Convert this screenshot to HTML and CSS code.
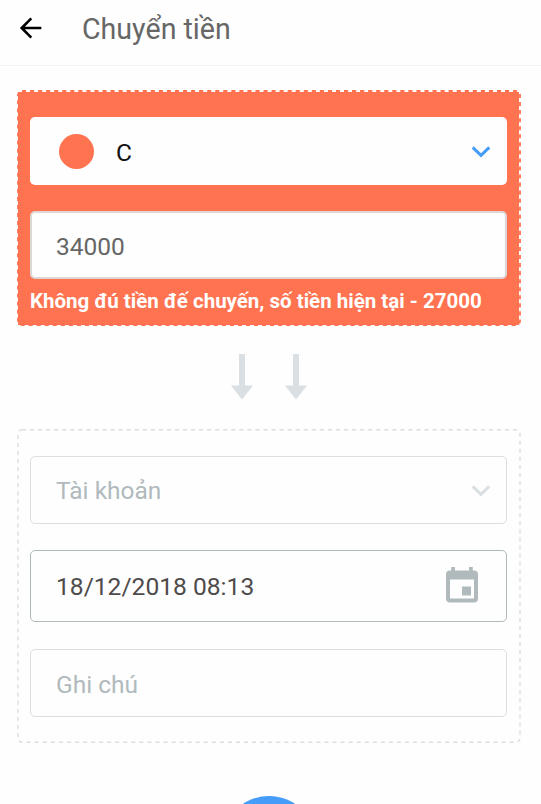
FILE: index.html
```html
<!DOCTYPE html>
<html lang="vi">
<head>
<meta charset="utf-8">
<title>Chuyển tiền</title>
<link rel="stylesheet" href="styles.css">
</head>
<body>
<header class="bar">
  <svg class="back" viewBox="0 0 24 24" width="24" height="24"><path d="M22.3 12H3M12.3 2.4 2.7 12l9.600 9.600" fill="none" stroke="#000" stroke-width="2.6"/></svg>
  <h1>Chuyển tiền</h1>
</header>
<main>
  <section class="panel source">
    <svg class="outline" width="504" height="236"><rect x="1" y="1" width="502" height="234" rx="4"/></svg>
    <div class="field account">
      <span class="dot"></span><span class="name">C</span>
      <svg class="chevron" width="20" height="12" viewBox="0 0 20 12"><path d="m1.7 1.4 8.3 8 8.3-8"/></svg>
    </div>
    <div class="field amount">34000</div>
    <p class="error">Không đú tiền đế chuyến, số tiền hiện tại - 27000</p>
  </section>
  <div class="arrows">
    <svg width="22" height="46" viewBox="0 0 22 46"><path d="M8 0h6v31.5h8L11 45.5 0 31.5h8z"/></svg>
    <svg width="22" height="46" viewBox="0 0 22 46"><path d="M8 0h6v31.5h8L11 45.5 0 31.5h8z"/></svg>
  </div>
  <section class="panel target">
    <svg class="outline" width="504" height="315"><rect x="1" y="0.7" width="502" height="312.5" rx="4"/></svg>
    <div class="field select">Tài khoản
      <svg class="chevron" width="20" height="12" viewBox="0 0 20 12"><path d="m1.7 1.4 8.3 8 8.3-8"/></svg>
    </div>
    <div class="field date">18/12/2018 08:13
      <svg class="calendar" width="32" height="36" viewBox="0 0 32 36"><path fill-rule="evenodd" d="M5.2 0H9v3.5h14V0h3.8v3.5H28a4 4 0 0 1 4 4V31.5a4 4 0 0 1-4 4H4a4 4 0 0 1-4-4v-24a4 4 0 0 1 4-4h1.200zM4 12.500v19h24v-19zM16 19.500h9v9h-9z"/></svg>
    </div>
    <div class="field note">Ghi chú</div>
  </section>
  <div class="submit"></div>
</main>
</body>
</html>
```
FILE: styles.css
```css
* { box-sizing: border-box; }
html, body { height: 804px; overflow: hidden; }
body { margin: 0; background: #fefefe; font-family: Roboto, sans-serif; }
.bar { height: 66px; border-bottom: 1px solid #f3f3f3; display: flex; align-items: flex-start; padding: 16px 0 0 19px; }
.back { flex: none; }
h1 { margin: -4px 0 0 39px; font-size: 28.600px; line-height: 34px; font-weight: 400; color: #666; }
main { height: 738px; overflow: hidden; padding: 24px 20px 0 17px; }
.panel { position: relative; width: 504px; padding: 27px 14px 0 13px; }
.outline { position: absolute; left: 0; top: 0; }
.outline rect { fill: none; stroke: #d9dfe2; stroke-width: 1.4; stroke-dasharray: 4.100 3.950; }
.source { height: 236px; background: linear-gradient(#ff7350, #ff7350) center / 501.4px 233px no-repeat; }
.source .outline rect { stroke: #ff7350; stroke-width: 1.800; }
.target { height: 315px; }
.field { position: relative; height: 68px; border-radius: 5px; background: #fefefe; display: flex; align-items: center; justify-content: space-between; padding: 0 16px 0 26px; font-size: 24.500px; color: #b0babd; }
.account { padding-left: 29px; justify-content: flex-start; }
.dot { width: 35px; height: 35px; border-radius: 50%; background: #ff7350; }
.name { margin: 2px 0 0 22px; color: #111; }
.account .chevron { margin: 2px 0 0 auto; }
.chevron path { fill: none; stroke: #d9dfe2; stroke-width: 3; }
.account .chevron path { stroke: #459df9; }
.amount { margin-top: 26px; border: 2px solid #dcd6d5; color: #666; padding-left: 24px; padding-top: 2px; }
.error { margin: 9px 0 0; font-size: 20.500px; line-height: 26px; font-weight: 700; color: #fff; white-space: nowrap; }
.arrows { margin-top: 28px; height: 75px; padding-left: 214.400px; display: flex; gap: 32px; align-items: flex-start; }
.arrows path { fill: #d9dfe2; }
.select, .note { border: 1.400px solid #d9dfe2; padding: 0 15px 0 25px; }
.select .chevron { margin-top: 1px; }
.note { padding-top: 2px; }
.date { height: 72px; margin: 26px 0 27px; border: 1px solid #b0babd; color: #4f4b4b; padding: 1px 28px 0 25px; font-size: 24.600px; }
.calendar { margin-top: -3px; }
.calendar path { fill: #b0babd; }
.submit { width: 94px; height: 94px; margin: 52px 0 0 205px; border-radius: 50%; background: #459df9; }
```
